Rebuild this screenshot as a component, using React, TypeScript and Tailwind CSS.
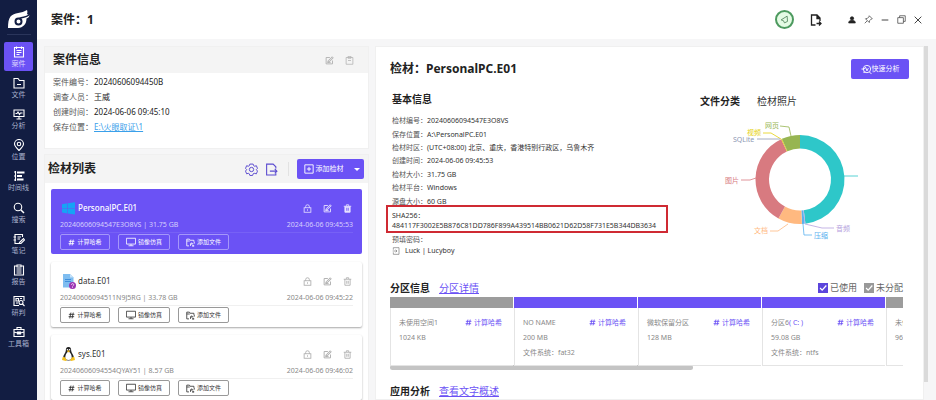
import type { ReactNode } from "react";
import clsx from "clsx";

type IconProps = { className?: string; children?: ReactNode; width?: number };

function Icon({ className, children, width = 2 }: IconProps) {
  return (
    <svg
      viewBox="0 0 24 24"
      fill="none"
      stroke="currentColor"
      strokeWidth={width}
      className={clsx("shrink-0", className)}
      aria-hidden="true"
    >
      {children}
    </svg>
  );
}

/* ---------- shared icons ---------- */

const EditIcon = ({ className }: { className?: string }) => (
  <Icon className={className} width={2.4}>
    <path d="M13 4H3v17h17v-9" />
    <path d="M7 17l2-5L19 2l3 3-10 10z" fill="currentColor" fillOpacity={0.35} />
    <path d="M7 17h8" />
  </Icon>
);

const LockIcon = () => (
  <Icon className="size-[9px]" width={2.2}>
    <rect x="3" y="10" width="18" height="12" />
    <path d="M7 10V7a5 5 0 0 1 10 0v3M12 14v4" />
  </Icon>
);

const TrashIcon = ({ solid }: { solid?: boolean }) => (
  <Icon className="size-[9px]" width={2.2}>
    <path d="M2 6h20M9 5V2h6v3" />
    <path d="M5 6v16h14V6" fill={solid ? "currentColor" : "none"} />
    <path d="M10 10v8M14 10v8" stroke={solid ? "#6b52f5" : "currentColor"} />
  </Icon>
);

const HashIcon = ({ className }: { className?: string }) => (
  <Icon className={className} width={3}>
    <path d="M10 2L6 22M18 2l-4 20M3 8h19M2 16h19" />
  </Icon>
);

const ScreenIcon = () => (
  <Icon className="size-[10px]" width={2}>
    <path d="M1 3h22v14H1zM12 17v4M6 21h12" />
  </Icon>
);

const AddFileIcon = () => (
  <Icon className="size-[9px]" width={2.2}>
    <path d="M8 21H2V3h7l2 3h10v4" />
    <path d="M2 8h8M22 10v5M12 21v-6h5M15 12l3 3-3 3M19 18v5M16 21h6" />
  </Icon>
);

const ExportIcon = ({ className, width }: { className?: string; width?: number }) => (
  <Icon className={className} width={width}>
    <path d="M20 10V7l-5-5H3v20h17v-3" />
    <path d="M9 15h13M18 11l4 4-4 4" />
  </Icon>
);

/* ---------- sidebar ---------- */

const navItems: { label: string; icon: ReactNode }[] = [
  {
    label: "案件",
    icon: (
      <>
        <path d="M3 3h18v19H3z" />
        <path d="M7 1v5M17 1v5M7 9h10M7 13h10M7 17h6" />
      </>
    ),
  },
  {
    label: "文件",
    icon: <path d="M2 3h8l3 4h9v15H2zM8 15h8" />,
  },
  {
    label: "分析",
    icon: (
      <>
        <path d="M2 4h20v13H2zM12 17v4M7 22h10" />
        <path d="M5 11h3l2-3 3 5 2-3h4" />
      </>
    ),
  },
  {
    label: "位置",
    icon: (
      <>
        <path d="M12 23C6 17 3 14 3 10a9 9 0 0 1 18 0c0 4-3 7-9 13z" />
        <circle cx="12" cy="10" r="3.5" />
      </>
    ),
  },
  {
    label: "时间线",
    icon: (
      <>
        <path d="M2 4h3M2 12h3M2 20h3M5 2v20" />
        <path d="M8 5h15M8 12h10M8 19h13" strokeWidth={4} />
      </>
    ),
  },
  {
    label: "搜索",
    icon: (
      <>
        <circle cx="10" cy="10" r="7.5" />
        <path d="M15.5 15.5L22 22" strokeWidth={3} />
      </>
    ),
  },
  {
    label: "笔记",
    icon: (
      <>
        <path d="M19 8V3H4v18h8M1 8h5M1 14h5M9 8h7M9 12h5" />
        <path d="M13 19l8-8 2 3-7 7h-4z" />
      </>
    ),
  },
  {
    label: "报告",
    icon: (
      <>
        <path d="M8 4H3v18h18V4h-5" />
        <path d="M8 2h8v4H8zM7 10h10M7 14h10M7 18h10" />
      </>
    ),
  },
  {
    label: "研判",
    icon: (
      <>
        <path d="M12 21H2V3h20v9M6 7h5v5H6zM14 7h4M6 16h4" />
        <circle cx="16" cy="15" r="4" />
        <path d="M19 18l4 4" />
      </>
    ),
  },
  {
    label: "工具箱",
    icon: <path d="M2 7h20v14H2zM8 7V3h8v4M2 12l7 2h6l7-2M9 12h6v4H9z" />,
  },
];

function Sidebar() {
  return (
    <aside className="flex w-[37px] shrink-0 flex-col items-center bg-[#121d42]">
      <svg viewBox="0 0 44 38" className="mt-2.5 h-[19px] w-[22px] shrink-0" aria-hidden="true">
        <path
          d="M0 36C0 26 1 18 5 13 12 5 28 7 38 0c1 3 1 5 0 8l5 3c-1 3-3 5-6 6 0 12-7 18-17 19z"
          fill="#fff"
        />
        <path d="M42 10c-8 6-12 3-19 7" fill="none" stroke="#121d42" strokeWidth="3" />
        <circle cx="21" cy="23" r="6" fill="none" stroke="#121d42" strokeWidth="4" />
      </svg>
      <div className="mt-[5px] h-px w-6 shrink-0 bg-[#2a355b]" />
      <nav className="mt-1.5 grid h-[312px] shrink-0 grid-rows-10 items-center">
        {navItems.map((item, i) => (
          <button
            key={item.label}
            className={clsx(
              "flex h-[29px] w-[29px] flex-col items-center justify-center gap-px rounded-xs",
              i === 0 ? "bg-[#6b52f5] text-[#dcd6ff]" : "text-[#a9b1cc]",
            )}
          >
            <Icon className="size-3 text-white" width={2.2}>
              {item.icon}
            </Icon>
            <span className="text-[7px] leading-[9px] whitespace-nowrap">{item.label}</span>
          </button>
        ))}
      </nav>
    </aside>
  );
}

/* ---------- top bar ---------- */

function TopBar() {
  return (
    <header className="flex h-[39px] shrink-0 items-center bg-white px-[14px]">
      <h1 className="flex-1 text-[12px] leading-4 font-bold text-[#222]">案件：1</h1>
      <button
        aria-label="状态"
        className="flex size-[19px] items-center justify-center rounded-full border-2 border-[#4d9a5f] bg-[#e4fbe4] text-[#4d7f58]"
      >
        <Icon className="size-[9px]" width={2.2}>
          <path d="M19 3L3 13l6 2 3 6 8-4z" strokeLinejoin="round" />
        </Icon>
      </button>
      <button aria-label="导出" className="mr-[26px] ml-4 text-[#222]">
        <Icon className="size-3" width={2.6}>
          <path d="M11 22H3V2h11l6 6v6" />
          <path d="M14 2v7h6" fill="currentColor" />
          <path d="M13 19h9M18 15l4 4-4 4" />
        </Icon>
      </button>
      <div className="flex items-center gap-2 text-[#444]">
        <button aria-label="用户">
          <Icon className="size-2 text-[#222]">
            <circle cx="12" cy="7" r="5" fill="currentColor" />
            <path d="M2 21c0-6 4-8 10-8s10 2 10 8z" fill="currentColor" />
          </Icon>
        </button>
        <button aria-label="固定">
          <Icon className="size-[9px]">
            <path d="M14 2l8 8-3 1-4 4-1 5-10-10 5-1 4-4zM8 16l-6 6" />
          </Icon>
        </button>
        <button aria-label="最小化">
          <Icon className="size-2" width={3}>
            <path d="M2 12h20" />
          </Icon>
        </button>
        <button aria-label="还原">
          <Icon className="size-[9px]">
            <path d="M2 7h15v15H2zM7 7V2h15v15h-5" />
          </Icon>
        </button>
        <button aria-label="关闭">
          <Icon className="size-2" width={3}>
            <path d="M2 2l20 20M22 2L2 22" />
          </Icon>
        </button>
      </div>
    </header>
  );
}

/* ---------- left column ---------- */

const caseInfo = [
  ["案件编号", "20240606094450B"],
  ["调查人员", "王威"],
  ["创建时间", "2024-06-06 09:45:10"],
];

function CaseInfo() {
  return (
    <section className="h-[103px] shrink-0 border border-[#f0f0f0] bg-white">
      <div className="flex h-[26px] items-center gap-[11px] bg-[#f4f4f4] pr-[14px] pl-2 text-[#b0b0b0]">
        <h2 className="flex-1 text-[12px] leading-4 font-bold text-[#222]">案件信息</h2>
        <button aria-label="编辑">
          <EditIcon className="size-[9px]" />
        </button>
        <button aria-label="复制">
          <Icon className="size-[9px]">
            <path d="M3 4h18v18H3zM8 1h8v5H8zM8 12h8" />
          </Icon>
        </button>
      </div>
      <dl className="mt-0.5 grid h-[59px] grid-rows-4 items-center pl-2 text-[8px] leading-3">
        {caseInfo.map(([label, value]) => (
          <div key={label} className="flex">
            <dt className="w-[41px] text-[#555]">{label}：</dt>
            <dd className="text-[#222]">{value}</dd>
          </div>
        ))}
        <div className="flex">
          <dt className="w-[41px] text-[#555]">保存位置：</dt>
          <dd>
            <a href="#path" className="text-[#3aa0ea] underline">
              E:\火眼取证\1
            </a>
          </dd>
        </div>
      </dl>
    </section>
  );
}

const WindowsLogo = () => (
  <svg viewBox="0 0 24 24" className="size-[13px]" fill="#16a3f5" aria-hidden="true">
    <path d="M0 4l10-1.500V11.500H0zM11 2.300L24 .5V11.500H11zM0 12.500h10V21L0 19.500zM11 12.500H24V23l-13-1.700z" />
  </svg>
);

const DataLogo = () => (
  <svg viewBox="0 0 28 30" className="h-[15px] w-[14px]" aria-hidden="true">
    <path d="M2 0h14l7 7v20H2z" fill="#7fbdf0" />
    <path d="M16 0l7 7h-7z" fill="#c6e2fa" />
    <path d="M6 11h12M6 15h12" stroke="#3f8fdc" strokeWidth="2" />
    <circle cx="21" cy="23" r="7" fill="#9b34b4" />
    <path d="M19 21.500a2.200 2.200 0 1 1 3 2q-1 .5-1 1.500M21 26v1.600" fill="none" stroke="#fff" strokeWidth="1.500" />
  </svg>
);

const LinuxLogo = () => (
  <svg viewBox="0 0 24 26" className="h-[14px] w-[13px]" aria-hidden="true">
    <path d="M12 0c4 0 5 3 5 7s5 8 5 13c0 3-4 5-10 5S2 23 2 20c0-5 5-9 5-13s1-7 5-7z" fill="#222" />
    <path d="M12 9c3 0 6 6 6 11 0 3-2 4-6 4s-6-1-6-4c0-5 3-11 6-11z" fill="#fff" />
    <circle cx="10" cy="5" r="1.400" fill="#fff" />
    <circle cx="14" cy="5" r="1.400" fill="#fff" />
    <path d="M9 7.500l3-1.500 3 1.500-3 2.500z" fill="#f5b91c" />
    <path d="M4 18l5 6-2 2-7-2 1-5zM20 18l-5 6 2 2 7-2-1-5z" fill="#f5c21c" />
  </svg>
);

const evidences = [
  { name: "PersonalPC.E01", id: "20240606094547E3O8VS", size: "31.75 GB", date: "2024-06-06 09:45:53", logo: <WindowsLogo /> },
  { name: "data.E01", id: "20240606094511N9J5RG", size: "33.78 GB", date: "2024-06-06 09:45:22", logo: <DataLogo /> },
  { name: "sys.E01", id: "20240606094554QYAY51", size: "8.57 GB", date: "2024-06-06 09:46:02", logo: <LinuxLogo /> },
];

function EvidenceCard({ item, active }: { item: (typeof evidences)[number]; active: boolean }) {
  const button = clsx(
    "flex h-4 items-center justify-center gap-0.5 rounded-xs border text-[6px] leading-2 whitespace-nowrap",
    active ? "border-[#a597fa] text-white" : "border-[#999] text-[#333]",
  );
  return (
    <li
      className={clsx(
        "h-[65px] shrink-0 rounded-xs px-[9px] pt-3",
        active ? "bg-[#6b52f5] text-white" : "bg-white text-[#333] shadow-[0_1px_2px_rgba(0,0,0,0.35)]",
      )}
    >
      <div className="flex h-[14px] items-center pl-0.5">
        <span className="flex w-[16px]">{item.logo}</span>
        <span className={clsx("flex-1 text-[8px] leading-3", active && "font-medium")}>{item.name}</span>
        <div className={clsx("flex gap-[11px] pr-px", active ? "text-[#e6e1ff]" : "text-[#aaa]")}>
          <button aria-label="锁定">
            <LockIcon />
          </button>
          <button aria-label="编辑">
            <EditIcon className="size-[9px]" />
          </button>
          <button aria-label="删除">
            <TrashIcon solid={active} />
          </button>
        </div>
      </div>
      <div
        className={clsx(
          "mt-1 flex justify-between border-b pb-0.5 text-[7px] leading-[11px]",
          active ? "border-[#7761f6] text-[#d6cffd]" : "border-[#f0f0f0] text-[#888]",
        )}
      >
        <span>
          {item.id} | {item.size}
        </span>
        <span>{item.date}</span>
      </div>
      <div className="mt-px flex gap-2">
        <button className={clsx(button, "w-[50px]")}>
          <HashIcon className="size-[7px]" />
          计算哈希
        </button>
        <button className={clsx(button, "w-[52px]")}>
          <ScreenIcon />
          镜像仿真
        </button>
        <button className={clsx(button, "w-[51px]")}>
          <AddFileIcon />
          添加文件
        </button>
      </div>
    </li>
  );
}

function EvidenceList() {
  return (
    <section className="flex-1 border border-[#f0f0f0] bg-white">
      <div className="flex h-7 items-center bg-[#f4f4f4] pr-1 pl-[3px]">
        <h2 className="flex-1 text-[12px] leading-4 font-bold text-[#222]">检材列表</h2>
        <button aria-label="设置" className="mr-[7px] text-[#5b4bd0]">
          <Icon className="size-[13px]" width={1.8}>
            <path d="M9 2h6l1 3 2 1 3-1 2 5-2 2 2 3-2 5-4-1-2 1-1 3H9l-1-3-2-1-3 1-2-5 2-3-2-2 2-5 3 1 2-1z" />
            <circle cx="12" cy="12" r="4" />
          </Icon>
        </button>
        <button aria-label="导出" className="text-[#5b4bd0]">
          <ExportIcon className="size-[13px]" />
        </button>
        <span className="mr-2 ml-2.5 h-3.5 w-px bg-[#e2e2e2]" />
        <div className="flex h-5 items-center rounded-xs bg-[#6b52f5] text-white">
          <button className="flex w-[53px] items-center justify-center gap-0.5 text-[7px] leading-[10px] whitespace-nowrap">
            <Icon className="size-[10px]" width={2.2}>
              <path d="M2 2h20v20H2zM12 7v10M7 12h10" />
            </Icon>
            添加检材
          </button>
          <button aria-label="更多" className="flex w-[14px] justify-center">
            <svg viewBox="0 0 12 6" className="h-[3px] w-1.5" fill="currentColor" aria-hidden="true">
              <path d="M0 0h12L6 6z" />
            </svg>
          </button>
        </div>
      </div>
      <ul className="flex flex-col gap-2 p-1.5">
        {evidences.map((item, i) => (
          <EvidenceCard key={item.name} item={item} active={i === 0} />
        ))}
      </ul>
    </section>
  );
}

/* ---------- detail panel ---------- */

const basicInfo = [
  ["检材编号", "20240606094547E3O8VS"],
  ["保存位置", "A:\\PersonalPC.E01"],
  ["检材时区", "(UTC+08:00) 北京、重庆，香港特别行政区，乌鲁木齐"],
  ["创建时间", "2024-06-06 09:45:53"],
  ["检材大小", "31.75 GB"],
  ["检材平台", "Windows"],
  ["源盘大小", "60 GB"],
];

function BasicInfo() {
  return (
    <section className="flex-1 pl-0.5 text-[7px] text-[#333]">
      <h3 className="text-[10px] leading-4 font-bold text-[#222]">基本信息</h3>
      <dl className="mt-[7px] grid h-[94px] grid-rows-7 items-center leading-[11px]">
        {basicInfo.map(([label, value]) => (
          <div key={label} className="flex">
            <dt className="w-[35px] whitespace-nowrap text-[#555]">{label}：</dt>
            <dd>{value}</dd>
          </div>
        ))}
      </dl>
      <div className="relative mt-[3px] w-[270px] leading-[10px]">
        <p>SHA256：</p>
        <p>484117F3002E5B876C81DD786F899A439514BB0621D62D58F731E5B344DB3634</p>
        <span className="absolute -inset-x-1.5 -top-1.5 -bottom-0.5 border-2 border-[#cf2a33]" />
      </div>
      <div className="mt-[3px] leading-[11px]">
        <p className="text-[#555]">预填密码：</p>
        <p className="flex items-center gap-[5px]">
          <Icon className="size-2 text-[#777]">
            <path d="M4 8V2h17v20H4v-6M2 12h13M11 8l4 4-4 4" />
          </Icon>
          Luck | Lucyboy
        </p>
      </div>
    </section>
  );
}

const slices = [
  { from: 0, to: 173, color: "#2ec7c9" },
  { from: 173, to: 174, color: "#b6a2de" },
  { from: 174, to: 177.5, color: "#5ab1ef" },
  { from: 177.5, to: 209, color: "#ffb980" },
  { from: 209, to: 335, color: "#d87a80" },
  { from: 335, to: 336, color: "#e5cf0d" },
  { from: 336, to: 360, color: "#97b552" },
];

const chartLabels = [
  { text: "网页", x: 75, y: 18, color: "#97b552", line: "90,16 99,17 101,26" },
  { text: "视频", x: 57, y: 25, color: "#e5cf0d", line: "73,23 81,23 91,29" },
  { text: "SQLite", x: 43, y: 32, color: "#8d98b3", line: "67,29 90,29" },
  { text: "图片", x: 35, y: 73, color: "#d87a80", line: "51,70 60,70 66,68" },
  { text: "文档", x: 64, y: 123, color: "#ffb980", line: "80,121 88,121 98,114" },
  { text: "压缩", x: 124, y: 128, color: "#5ab1ef", line: "113,114 114,125 122,125" },
  { text: "音频", x: 146, y: 121, color: "#b6a2de", line: "115,114 132,118 144,118" },
  { text: "", x: 0, y: 0, color: "#2ec7c9", line: "154,66 168,66" },
];

function arc(from: number, to: number) {
  const point = (deg: number, r: number) => {
    const a = (deg * Math.PI) / 180;
    return `${(110 + r * Math.sin(a)).toFixed(2)} ${(69.5 - r * Math.cos(a)).toFixed(2)}`;
  };
  return `M${point(from, 44.5)}A44.5 44.5 0 0 1 ${point(to, 44.5)}L${point(to, 31)}A31 31 0 0 0 ${point(from, 31)}Z`;
}

function FileChart() {
  return (
    <section className="w-[209px] shrink-0 pt-0.5">
      <div className="flex gap-[17px] text-[10px] leading-4 text-[#333]" role="tablist">
        <button role="tab" aria-selected="true" className="font-bold text-[#222]">
          文件分类
        </button>
        <button role="tab" aria-selected="false">
          检材照片
        </button>
      </div>
      <svg viewBox="10 0 209 140" className="mt-px h-[140px] w-full text-[7px]" role="img" aria-label="文件分类">
        {slices.map((s) => (
          <path key={s.from} d={arc(s.from, s.to)} fill={s.color} />
        ))}
        {chartLabels.map((l) => (
          <g key={l.line}>
            <polyline points={l.line} fill="none" stroke={l.color} strokeWidth="0.8" />
            <text x={l.x} y={l.y} fill={l.color}>
              {l.text}
            </text>
          </g>
        ))}
      </svg>
    </section>
  );
}

const partitions = [
  { name: "未使用空间1", size: "1024 KB", fs: "", used: false },
  { name: "NO NAME", size: "200 MB", fs: "fat32", used: true },
  { name: "微软保留分区", size: "128 MB", fs: "", used: true },
  { name: "分区6", drive: "( C: )", size: "59.08 GB", fs: "ntfs", used: true },
  { name: "未使用空间2", size: "96.00 KB", fs: "", used: false },
];

function Check({ label, color }: { label: string; color: string }) {
  return (
    <label className="flex items-center gap-0.5 text-[9px] leading-3 text-[#666]">
      <span className="relative flex size-[10px]">
        <input type="checkbox" defaultChecked className={clsx("size-full appearance-none", color)} />
        <Icon className="pointer-events-none absolute inset-0 size-[10px] text-white" width={3}>
          <path d="M5 12l5 5L20 6" />
        </Icon>
      </span>
      {label}
    </label>
  );
}

function Partitions() {
  return (
    <section>
      <div className="flex h-[18px] items-center text-[10px] leading-4">
        <h3 className="font-bold text-[#222]">分区信息</h3>
        <a href="#partitions" className="ml-[9px] flex-1 text-[#6b52f5] underline">
          分区详情
        </a>
        <div className="flex gap-[7px]">
          <Check label="已使用" color="bg-[#5b45dc]" />
          <Check label="未分配" color="bg-[#999]" />
        </div>
      </div>
      <div className="flex gap-px overflow-hidden">
        {partitions.map((p) => (
          <article key={p.name} className="w-[123px] shrink-0 text-[7px] leading-[15px] text-[#888]">
            <div className={clsx("h-[11px]", p.used ? "bg-[#6b52f5]" : "bg-[#9c9c9c]")} />
            <div className="h-[58px] border-b border-l border-[#e4e4e4] pt-[7px] pr-[11px] pl-2">
              <div className="flex justify-between">
                <span className="whitespace-nowrap">
                  {p.name}
                  {p.drive && <span className="text-[#6b52f5]">{p.drive}</span>}
                </span>
                <button className="flex items-center gap-0.5 whitespace-nowrap text-[#6b52f5]">
                  <HashIcon className="size-[7px]" />
                  计算哈希
                </button>
              </div>
              <p>{p.size}</p>
              {p.fs && <p>文件系统：{p.fs}</p>}
            </div>
          </article>
        ))}
      </div>
      <div className="-mt-px h-[5px] w-[59%] rounded-full bg-[#c4c4c4]" />
    </section>
  );
}

function DetailPanel() {
  return (
    <main className="flex min-w-0 flex-1 flex-col overflow-hidden border border-[#f0f0f0] bg-white pt-3 pl-[14px]">
      <div className="flex h-5 shrink-0 items-center justify-between pr-[14px]">
        <h2 className="text-[12px] leading-4 font-bold text-[#222]">检材：PersonalPC.E01</h2>
        <button className="flex h-5 w-[58px] items-center justify-center rounded-xs bg-[#6b52f5] text-[7px] leading-[10px] text-white">
          <Icon className="size-[11px]" width={2}>
            <circle cx="13" cy="11" r="8" />
            <path d="M18 17l5 5M1 11h6l3-4 3 8 3-6M5 18h5" />
          </Icon>
          快速分析
        </button>
      </div>
      <div className="mt-3 flex h-[188px] shrink-0 pr-3.5">
        <BasicInfo />
        <FileChart />
      </div>
      <div className="pr-5">
        <Partitions />
        <section className="mt-[13px] flex text-[10px] leading-4">
          <h3 className="font-bold text-[#222]">应用分析</h3>
          <a href="#apps" className="ml-[9px] text-[#6b52f5] underline">
            查看文字概述
          </a>
        </section>
      </div>
    </main>
  );
}

export default function App() {
  return (
    <div className="flex h-screen overflow-hidden bg-[#f6f6f7] font-['Noto_Sans','Noto_Sans_CJK_SC',sans-serif]">
      <Sidebar />
      <div className="flex min-w-0 flex-1 flex-col">
        <TopBar />
        <div className="flex min-h-0 flex-1 gap-1.5 pt-[7px] pr-2 pl-[7px]">
          <div className="flex w-[325px] shrink-0 flex-col gap-[5px]">
            <CaseInfo />
            <EvidenceList />
          </div>
          <div className="flex min-w-0 flex-1">
            <DetailPanel />
            <div className="h-[95%] w-1 bg-[#dadada]" />
          </div>
        </div>
      </div>
    </div>
  );
}
